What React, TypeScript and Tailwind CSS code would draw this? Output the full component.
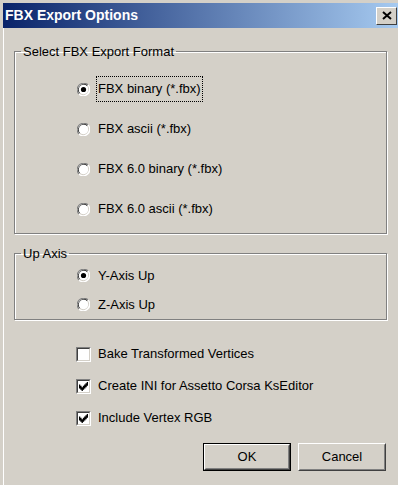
import React from "react";

const font = { fontFamily: "Tahoma, 'Liberation Sans', Arial, sans-serif" };

function Radio({ checked }: { checked?: boolean }) {
  return (
    <svg width="13" height="13" viewBox="0 0 12 12" className="shrink-0">
      <circle cx="6" cy="6" r="6" fill="#fff" />
      <path d="M10.24 1.76 A6 6 0 0 0 1.76 10.24" stroke="#808080" strokeWidth="1" fill="none" />
      <path d="M9.5 2.5 A5 5 0 0 0 2.5 9.5" stroke="#404040" strokeWidth="1" fill="none" />
      <path d="M1.76 10.24 A6 6 0 0 0 10.24 1.76" stroke="#fff" strokeWidth="1" fill="none" />
      <path d="M2.5 9.5 A5 5 0 0 0 9.5 2.5" stroke="#d4d0c8" strokeWidth="1" fill="none" />
      <circle cx="6" cy="6" r="4.3" fill="#fff" />
      {checked && <circle cx="6" cy="6" r="2.4" fill="#000" />}
    </svg>
  );
}

function Check({ checked }: { checked?: boolean }) {
  return (
    <div className="w-[15px] h-[15px] shrink-0 border border-t-[#808080] border-l-[#808080] border-b-white border-r-white">
      <div className="w-full h-full bg-white border border-t-[#404040] border-l-[#404040] border-b-[#d4d0c8] border-r-[#d4d0c8] flex items-center justify-center">
        {checked && (
          <svg width="9" height="9" viewBox="0 0 7 7">
            <path d="M0 2h1v1h1v1h1v-1h1v-1h1v-1h1v-1h1v3h-1v1h-1v1h-1v1h-1v1h-1v-1h-1v-1h-1z" fill="#000" />
          </svg>
        )}
      </div>
    </div>
  );
}

function RadioRow({ label, checked, focus }: { label: string; checked?: boolean; focus?: boolean }) {
  return (
    <div className="h-[40px] flex items-center pl-[62px] gap-[6px]">
      <Radio checked={checked} />
      <span className={focus ? "px-[1px] py-[2px] border border-dotted border-black" : "px-[2px]"}>{label}</span>
    </div>
  );
}

function CheckRow({ label, checked }: { label: string; checked?: boolean }) {
  return (
    <div className="h-[32px] flex items-center pl-[62px] gap-[7px]">
      <Check checked={checked} />
      <span>{label}</span>
    </div>
  );
}

function Btn({ label, def }: { label: string; def?: boolean }) {
  const inner = (
    <div className="w-full h-full border border-t-white border-l-white border-r-[#404040] border-b-[#404040]">
      <div className="w-full h-full border border-t-[#d4d0c8] border-l-[#d4d0c8] border-r-[#808080] border-b-[#808080] flex items-center justify-center">
        {label}
      </div>
    </div>
  );
  return def ? (
    <div className="w-[88px] h-[28px] border border-black">{inner}</div>
  ) : (
    <div className="w-[88px] h-[28px]">{inner}</div>
  );
}

export default function App() {
  return (
    <div className="w-[398px] h-[485px] bg-[#d4d0c8] text-black text-[13px] overflow-hidden border-t-[3px] border-l-[3px] border-[#d4d0c8] shadow-[inset_1px_1px_0_#fff]" style={font}>
      <div className="h-[25px] flex items-center justify-between pl-[2px] pr-[1px] bg-[linear-gradient(to_right,#0a246a,#a6caf0)]">
        <span className="text-white font-bold text-[14px]">FBX Export Options</span>
        <div className="w-[21px] h-[18px] bg-[#d4d0c8] border border-t-white border-l-white border-r-[#404040] border-b-[#404040] flex items-center justify-center">
          <svg width="10" height="9" viewBox="0 0 10 9">
            <path d="M1 1L9 8M9 1L1 8" stroke="#000" strokeWidth="2" />
          </svg>
        </div>
      </div>

      <div className="px-[11px] pt-[16px]">
        <fieldset className="border border-[#808080] shadow-[inset_1px_1px_0_#fff,1px_1px_0_#fff] px-0 pb-[4px] pt-[10px] m-0 h-[190px]">
          <legend className="ml-[6px] px-[2px] leading-[15px]">Select FBX Export Format</legend>
          <RadioRow label="FBX binary (*.fbx)" checked focus />
          <RadioRow label="FBX ascii (*.fbx)" />
          <RadioRow label="FBX 6.0 binary (*.fbx)" />
          <RadioRow label="FBX 6.0 ascii (*.fbx)" />
        </fieldset>

        <fieldset className="border border-[#808080] shadow-[inset_1px_1px_0_#fff,1px_1px_0_#fff] px-0 pt-0 pb-0 m-0 mt-[12px]">
          <legend className="ml-[6px] px-[2px] leading-[15px]">Up Axis</legend>
          <div className="h-[29px] flex items-center pl-[62px] gap-[6px]">
            <Radio checked />
            <span className="px-[2px]">Y-Axis Up</span>
          </div>
          <div className="h-[29px] flex items-center pl-[62px] gap-[6px]">
            <Radio />
            <span className="px-[2px]">Z-Axis Up</span>
          </div>
        </fieldset>

        <div className="mt-[18px]">
          <CheckRow label="Bake Transformed Vertices" />
          <CheckRow label="Create INI for Assetto Corsa KsEditor" checked />
          <CheckRow label="Include Vertex RGB" checked />
        </div>

        <div className="flex justify-end gap-[7px] mt-[9px] pr-[1px]">
          <Btn label="OK" def />
          <Btn label="Cancel" />
        </div>
      </div>
    </div>
  );
}
